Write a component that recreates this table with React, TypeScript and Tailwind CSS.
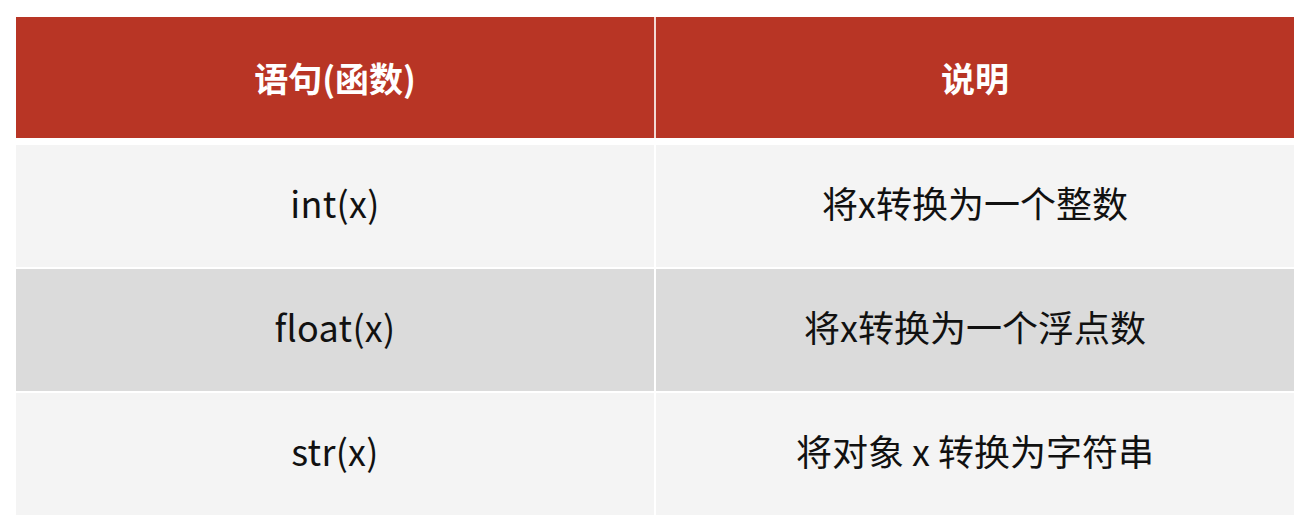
const ROWS = [
  { fn: 'int(x)', desc: '将x转换为一个整数', tone: 'light' },
  { fn: 'float(x)', desc: '将x转换为一个浮点数', tone: 'dark' },
  { fn: 'str(x)', desc: '将对象 x 转换为字符串', tone: 'light' },
];

const CELL_BG: Record<string, string> = {
  light: 'bg-[#f4f4f4]',
  dark: 'bg-[#dbdbdb]',
};

export default function App() {
  return (
    <div
      className="min-h-[531px] w-full bg-white pt-[17px] pl-[16px]"
      style={{ fontFamily: '"Noto Sans CJK SC", "Noto Sans", sans-serif' }}
    >
      <div className="w-[1278px]">
        <div className="mb-[7px] grid h-[121px] grid-cols-2 gap-x-[2px] bg-[#f3d9d4]">
          <div className="flex items-center justify-center bg-[#b83525] text-[34px] font-bold text-white">
            语句(函数)
          </div>
          <div className="flex items-center justify-center bg-[#b83525] text-[34px] font-bold text-white">
            说明
          </div>
        </div>

        <div className="flex flex-col gap-y-[2px]">
          {ROWS.map(r => (
            <div key={r.fn} className="grid h-[122px] grid-cols-2 gap-x-[2px]">
              <div className={`flex items-center justify-center pb-[8px] text-[36px] tracking-[0.3px] text-[#111] ${CELL_BG[r.tone]}`}>
                {r.fn}
              </div>
              <div className={`flex items-center justify-center pb-[8px] text-[36px] text-[#111] ${CELL_BG[r.tone]}`}>
                {r.desc}
              </div>
            </div>
          ))}
        </div>
      </div>
    </div>
  );
}
